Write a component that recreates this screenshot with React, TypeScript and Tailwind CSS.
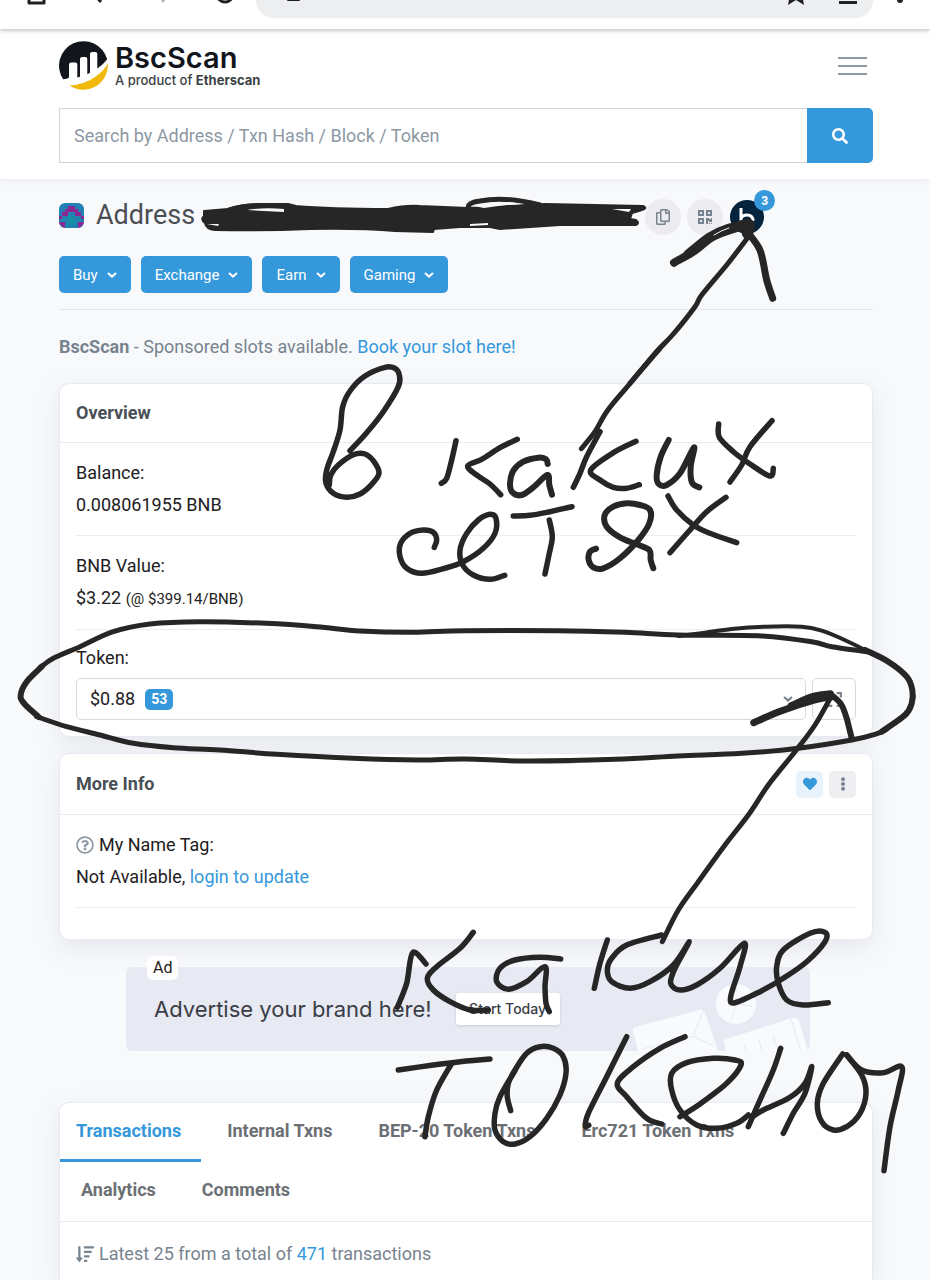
import React from "react";
import {
  FaSearch,
  FaRegCopy,
  FaQrcode,
  FaHeart,
  FaEllipsisV,
  FaRegQuestionCircle,
  FaSortAmountDown,
  FaExpand,
} from "react-icons/fa";

type Point = [number, number];
type InkStroke = { origin: Point; width?: number; points: number[] };

/* Smooth curve (Catmull-Rom) through pen samples taken at three samples per pixel. */
function inkPath({ origin, points }: InkStroke): string {
  const p: Point[] = [];
  for (let i = 0; i < points.length; i += 2) {
    p.push([origin[0] + points[i] / 3, origin[1] + points[i + 1] / 3]);
  }
  const f = (n: number) => n.toFixed(1);
  let d = `M${f(p[0][0])} ${f(p[0][1])}`;
  for (let i = 0; i < p.length - 1; i++) {
    const a = p[Math.max(i - 1, 0)];
    const b = p[i];
    const c = p[i + 1];
    const e = p[Math.min(i + 2, p.length - 1)];
    d += `C${f(b[0] + (c[0] - a[0]) / 6)} ${f(b[1] + (c[1] - a[1]) / 6)} ${f(c[0] - (e[0] - b[0]) / 6)} ${f(
      c[1] - (e[1] - b[1]) / 6,
    )} ${f(c[0])} ${f(c[1])}`;
  }
  return d;
}

const A: Point = [300, 350];
const B: Point = [560, 350];
const C: Point = [460, 180];
const D: Point = [0, 600];
const E: Point = [465, 600];
const F: Point = [100, 920];
const G: Point = [500, 900];

const INK: InkStroke[] = [
  { origin: A, points: [150, 302, 200, 248, 250, 185, 295, 110, 298, 75, 285, 55, 255, 52, 195, 78, 152, 120, 128, 170, 120, 240, 100, 305, 80, 360, 78, 400, 100, 430, 140, 442, 180, 432, 215, 403, 237, 370, 222, 335, 195, 312, 160, 314, 115, 345, 92, 375, 88, 405] },
  { origin: A, points: [468, 272, 455, 330, 440, 385, 424, 400] },
  { origin: A, points: [652, 268, 600, 293, 545, 328, 503, 348, 530, 375, 570, 402, 602, 434] },
  { origin: A, width: 6, points: [743, 342, 738, 328, 715, 323, 670, 335, 640, 362, 630, 400, 638, 428, 665, 435, 700, 412, 742, 375, 748, 405, 756, 434] },
  { origin: A, points: [640, 498, 690, 496, 750, 485, 816, 470] },
  { origin: A, points: [748, 510, 757, 560, 748, 610, 735, 672] },
  { origin: A, points: [403, 592, 410, 570, 400, 547, 370, 540, 330, 550, 302, 580, 300, 620, 320, 655, 365, 670, 430, 656, 490, 635, 550, 595, 585, 550, 588, 505, 570, 493, 535, 510, 500, 550, 480, 600, 488, 645, 520, 675, 570, 688, 614, 676] },
  { origin: B, points: [120, 245, 80, 320, 60, 370, 40, 412] },
  { origin: B, points: [228, 274, 160, 308, 92, 360, 120, 390, 160, 412, 200, 415, 238, 404] },
  { origin: B, width: 6, points: [326, 270, 302, 320, 290, 375, 296, 402, 320, 405, 360, 370, 402, 292, 392, 350, 396, 398, 418, 412] },
  { origin: B, points: [476, 222, 478, 262, 520, 305, 570, 342, 630, 378, 640, 355] },
  { origin: B, points: [636, 212, 570, 290, 545, 345, 510, 396] },
  { origin: B, width: 6, points: [108, 596, 90, 605, 86, 630, 100, 652, 130, 655, 180, 625, 235, 570, 268, 520, 270, 480, 240, 465, 200, 460, 160, 470, 134, 495, 140, 530, 180, 562, 230, 583, 268, 600, 272, 630, 280, 655] },
  { origin: B, points: [324, 438, 350, 480, 400, 525, 450, 550, 530, 578] },
  { origin: B, points: [498, 442, 440, 485, 390, 540, 330, 608] },
  { origin: B, width: 5, points: [64, 296, 105, 245, 140, 185, 200, 112, 300, -5] },
  { origin: C, width: 5, points: [510, 610, 585, 520, 640, 462, 705, 380, 725, 345, 800, 255, 862, 175] },
  { origin: C, width: 8, points: [642, 248, 700, 215, 760, 170, 830, 144, 868, 138] },
  { origin: C, width: 6, points: [680, 220, 745, 168, 800, 142, 868, 130] },
  { origin: C, width: 7, points: [850, 140, 895, 200, 908, 240, 920, 300, 938, 355] },
  { origin: C, width: 11, points: [840, 138, 868, 134, 862, 160] },
  { origin: E, width: 4, points: [640, 108, 720, 98, 800, 87, 900, 80, 1010, 80, 1070, 92, 1150, 125, 1215, 158] },
  { origin: E, width: 6, points: [1200, 150, 1270, 185, 1325, 230, 1342, 270, 1340, 310, 1320, 345, 1250, 395] },
  { origin: E, width: 5, points: [1265, 388, 1230, 403, 1160, 420, 1000, 445, 830, 460, 640, 468, 450, 478, 180, 483, 0, 477, -140, 480, -335, 475, -565, 463, -735, 450, -875, 443, -995, 430, -1095, 405, -1195, 380, -1285, 350] },
  { origin: D, width: 6, points: [115, 350, 72, 310, 62, 285, 80, 245, 125, 200] },
  { origin: D, width: 5, points: [120, 203, 160, 175, 240, 140, 340, 95, 450, 72, 600, 65, 800, 70, 950, 80, 1080, 93, 1240, 97, 1395, 92, 1675, 92, 1875, 97, 2035, 105, 2275, 107, 2435, 125, 2495, 140, 2600, 155] },
  { origin: E, width: 5, points: [592, 1025, 640, 930, 700, 845, 780, 735, 850, 645, 910, 555, 990, 455, 1050, 375, 1098, 290] },
  { origin: E, width: 7, points: [866, 368, 950, 332, 1050, 300, 1100, 290] },
  { origin: E, width: 8, points: [980, 318, 1040, 292, 1095, 283] },
  { origin: E, width: 6, points: [1100, 285, 1128, 312, 1145, 355, 1160, 415] },
  { origin: F, points: [892, 262, 920, 190, 938, 98, 978, 132] },
  { origin: F, points: [1120, 37, 1080, 85, 1010, 140, 982, 175, 1000, 210, 1050, 245, 1110, 270, 1165, 270] },
  { origin: G, points: [182, 177, 120, 172, 45, 180, 0, 205, -10, 245, 25, 268, 80, 245, 135, 200, 135, 260, 138, 310, 148, 335] },
  { origin: G, points: [322, 120, 300, 190, 283, 265] },
  { origin: G, points: [485, 105, 380, 135, 335, 175, 322, 210, 335, 245, 390, 265, 450, 245, 520, 195, 568, 125, 525, 205, 512, 250, 540, 270, 590, 255, 660, 205, 733, 130, 720, 200, 692, 290, 705, 308, 780, 275, 850, 235, 920, 185, 975, 125, 975, 97, 930, 100, 850, 150, 830, 200, 835, 250, 860, 300, 910, 315, 985, 308] },
  { origin: F, points: [895, 450, 1000, 435, 1080, 425, 1170, 417] },
  { origin: F, points: [1055, 430, 1010, 510, 985, 590, 975, 650] },
  { origin: G, points: [45, 512, 0, 590, -15, 640, -15, 690, 10, 725, 45, 732, 90, 710, 140, 655, 180, 585, 198, 520, 190, 470, 160, 445, 120, 440, 80, 460, 45, 510, 25, 550, 22, 590, 32, 632] },
  { origin: G, points: [380, 410, 320, 530, 265, 640, 256, 678, 266, 676] },
  { origin: G, points: [555, 410, 480, 445, 400, 500, 352, 550, 380, 590, 440, 655, 485, 672] },
  { origin: G, points: [540, 650, 600, 612, 680, 550, 723, 495, 705, 480, 640, 475, 560, 488, 515, 520, 515, 570, 540, 630, 590, 675, 650, 685, 710, 670, 745, 645] },
  { origin: G, points: [842, 445, 820, 510, 780, 600, 745, 680] },
  { origin: G, points: [755, 652, 790, 630, 870, 592, 915, 550, 935, 500, 915, 580, 880, 640, 850, 700] },
  { origin: G, points: [1028, 462, 970, 550, 952, 610, 965, 665, 1000, 690, 1040, 680, 1080, 640, 1098, 580, 1085, 525, 1040, 465] },
  { origin: G, points: [1040, 465, 1085, 510, 1150, 518, 1205, 500, 1195, 570, 1170, 680, 1152, 812] },
];

function InkOverlay() {
  return (
    <svg
      className="pointer-events-none absolute left-0 top-0 z-10"
      width="930"
      height="1280"
      viewBox="0 0 930 1280"
      fill="none"
      stroke="#262626"
      strokeLinecap="round"
      strokeLinejoin="round"
      aria-hidden="true"
    >
      <path
        fill="#262626"
        strokeWidth="2"
        d="M204 211L228 209Q240 205 258 204L288 204L296 206Q330 209 388 209Q405 205 420 206L468 208L545 204L643 206Q648 208 642 210L632 213L630 219L636 220Q640 223 636 225L560 225L500 229L490 227L460 227L434 229L433 232L395 231Q360 228 310 229Q260 231 215 230Q206 229 205 223Q200 219 204 216Z"
      />
      <path strokeWidth="5" d="M469 208Q466 203 480 201Q505 196 540 205" />
      <path strokeWidth="4" d="M228 210Q245 204 262 206L290 206" />
      <path fill="#f8f9fb" stroke="none" d="M474 206Q500 199 522 204Q500 205 484 208ZM247 210Q264 207 284 209L284 212ZM207 224L219 224L218 226ZM612 209L631 209L629 212ZM470 224L488 223L488 225L470 226Z" />
      {INK.map((s, i) => (
        <path key={i} d={inkPath(s)} strokeWidth={s.width ?? 5.5} />
      ))}
      <path stroke="#f8f9fb" strokeWidth="1" d="M714 235Q722 230 729 228" />
    </svg>
  );
}

function BrowserBar() {
  return (
    <div className="relative z-[1] flex h-[29px] items-start bg-white pr-[22px] text-[#202124] shadow-[0_1px_5px_rgba(0,0,0,0.3)]">
      <button aria-label="Home" className="ml-[27px] h-[6px] w-5">
        <svg width="20" height="6" fill="none" stroke="currentColor" strokeWidth="3">
          <path d="M2 -2V3H17V-2" strokeLinejoin="round" />
        </svg>
      </button>
      <button aria-label="Back" className="ml-[44px] h-[6px] w-5">
        <svg width="20" height="6" fill="none" stroke="currentColor" strokeWidth="3">
          <path d="M2 -7L10 2" />
        </svg>
      </button>
      <button aria-label="Forward" className="ml-[44px] h-[6px] w-5 text-[#a8a8a8]">
        <svg width="20" height="6" fill="none" stroke="currentColor" strokeWidth="2">
          <path d="M15 -7L7 2" />
        </svg>
      </button>
      <button aria-label="Reload" className="ml-[40px] h-[6px] w-5">
        <svg width="20" height="6" fill="none" stroke="currentColor" strokeWidth="3">
          <circle cx="10" cy="-6" r="8" />
        </svg>
      </button>
      <div className="ml-[21px] flex h-[18px] flex-1 items-start rounded-b-[28px] bg-[#edeef0]">
        <svg className="ml-[31px]" width="14" height="3" fill="currentColor" aria-hidden="true">
          <path d="M0 -2H13V0Q13 1 12 1H1Q0 1 0 0Z" />
        </svg>
        <span className="flex-1" />
        <button aria-label="Bookmark" className="mr-[32px] h-[6px] w-5">
          <svg width="20" height="6" fill="currentColor">
            <path d="M4 -6L2 5L10 0L18 5L16 -6Z" />
          </svg>
        </button>
        <button aria-label="Downloads" className="mr-[15px] h-[6px] w-5">
          <svg width="20" height="6" fill="currentColor">
            <path d="M1 1H19V4H1Z" />
          </svg>
        </button>
      </div>
      <button aria-label="Browser menu" className="ml-[23px] h-[6px] w-3">
        <svg width="12" height="6" fill="currentColor">
          <circle cx="4" cy="0" r="3" />
        </svg>
      </button>
    </div>
  );
}

function LogoMark() {
  return (
    <svg width="49" height="49" viewBox="0 0 49 49" aria-hidden="true">
      <path
        fill="#12161c"
        d="M4.200 38.300A24.500 24.500 0 1 1 48.200 18.300Q44.500 23.500 38.300 27.500V13Q38.300 11 36.300 11H33.200Q31 11 31 13V31.800L28.300 33.200V18Q28.300 16 26.300 16H23.200Q21 16 21 18V35.800L18.300 36.600V23.500Q18.300 21.500 16.300 21.500H12.300Q10 21.500 10 23.500V36.500Q8.500 38.300 4.200 38.300Z"
      />
      <path fill="#f0b90b" d="M10.500 44.500C26 44 42 35 48.800 22.500A24.500 24.500 0 0 1 10.500 44.500Z" />
    </svg>
  );
}

function Header() {
  return (
    <header className="bg-white pb-4 pl-[59px] pr-[57px] pt-3 shadow-[0_1px_6px_rgba(138,152,186,0.15)]">
      <div className="flex items-center justify-between">
        <a href="#" className="flex items-center gap-[7px]">
          <LogoMark />
          <span className="flex flex-col font-[Inter,sans-serif] text-[#12161c]">
            <span className="text-[29px] font-semibold leading-7">BscScan</span>
            <span className="whitespace-nowrap text-[13px] font-medium leading-4 text-[#3b3f44]">
              A product of <b className="font-bold">Etherscan</b>
            </span>
          </span>
        </a>
        <button aria-label="Toggle navigation" className="mr-[6px] flex w-[29px] flex-col gap-[6px]">
          <span className="h-[2px] bg-[#8c98a4]" />
          <span className="h-[2px] bg-[#8c98a4]" />
          <span className="h-[2px] bg-[#8c98a4]" />
        </button>
      </div>
      <form className="mt-[18px] flex h-[55px]" onSubmit={(e) => e.preventDefault()}>
        <input
          aria-label="Search"
          placeholder="Search by Address / Txn Hash / Block / Token"
          className="min-w-0 flex-1 border border-r-0 border-[#d0d4d9] bg-white px-[14px] text-[18px] outline-none placeholder:text-[#8c98a4]"
        />
        <button
          aria-label="Submit search"
          className="flex w-[66px] items-center justify-center rounded-r-[5px] bg-[#3498db] text-white"
        >
          <FaSearch size={16} />
        </button>
      </form>
    </header>
  );
}

const IDENTICON = ["bbbbbbbb", "bbbppbbb", "bbppppbb", "bppbbppb", "pbbttbbp", "btbttbtb", "ppbttbpp", "bpbbbbpb"];
const IDENTICON_FILL: Record<string, string> = { b: "#2380b4", p: "#8a2790", t: "#168fa5" };

function Identicon() {
  return (
    <svg className="h-[25px] w-[25px] rounded-[6px]" viewBox="0 0 8 8" shapeRendering="crispEdges" aria-hidden="true">
      {IDENTICON.flatMap((row, y) =>
        [...row].map((c, x) => <rect key={`${x}-${y}`} x={x} y={y} width="1" height="1" fill={IDENTICON_FILL[c]} />),
      )}
    </svg>
  );
}

function Chevron() {
  return (
    <svg width="10" height="6" viewBox="0 0 10 6" fill="none" stroke="currentColor" strokeWidth="2" aria-hidden="true">
      <path d="M1 1L5 4.600L9 1" />
    </svg>
  );
}

function AddressTitle() {
  return (
    <div className="flex h-[40px] items-center">
      <Identicon />
      <h1 className="ml-3 text-[27px] leading-8 text-[#4a4f55]">Address</h1>
      <span className="w-[450px]" />
      <button
        aria-label="Copy address"
        className="mt-1 flex size-9 items-center justify-center rounded-full bg-[#ececf0] text-[#77838f]"
      >
        <FaRegCopy size={16} />
      </button>
      <button
        aria-label="Show QR code"
        className="ml-[6px] mt-1 flex size-9 items-center justify-center rounded-full bg-[#ececf0] text-[#77838f]"
      >
        <FaQrcode size={16} />
      </button>
      <button aria-label="Other networks" className="relative ml-[7px] mt-1 size-[34px] rounded-full bg-[#04233c]">
        <svg width="34" height="34" viewBox="0 0 34 34" fill="none" stroke="#fff" strokeWidth="3">
          <path d="M11 8V24M11 19Q12 15 17 15Q23 15 23 21" />
        </svg>
        <span className="absolute -right-[11px] -top-[10px] flex size-[21px] items-center justify-center rounded-full bg-[#3498db] text-[12px] font-bold text-white">
          3
        </span>
      </button>
    </div>
  );
}

function Card({ children, className = "" }: { children: React.ReactNode; className?: string }) {
  return (
    <section
      className={`border border-[#e7eaf3] bg-white shadow-[0_8px_24px_rgba(138,146,166,0.16)] ${className}`}
    >
      {children}
    </section>
  );
}

const TABS = ["Transactions", "Internal Txns", "BEP-20 Token Txns", "Erc721 Token Txns", "Analytics", "Comments"];

export default function App() {
  return (
    <div className="relative flex min-h-screen flex-col bg-[#f8f9fb] font-[Roboto,'Liberation_Sans',sans-serif] text-[18px] leading-8 text-[#1e2022]">
      <BrowserBar />
      <Header />
      <main className="flex flex-1 flex-col pl-[59px] pr-[57px] pt-4">
        <AddressTitle />
        <div className="mt-[21px] flex gap-[10px] border-b border-[#e2e5ea] pb-4">
          {["Buy", "Exchange", "Earn", "Gaming"].map((label) => (
            <button
              key={label}
              className="flex h-[37px] items-center gap-[9px] rounded-[5px] bg-[#3498db] px-[14px] text-[15px] text-white"
            >
              {label}
              <Chevron />
            </button>
          ))}
        </div>
        <p className="mt-[21px] text-[#77838f]">
          <b>BscScan</b> - Sponsored slots available.{" "}
          <a href="#" className="text-[#3498db]">
            Book your slot here!
          </a>
        </p>

        <Card className="mt-5 rounded-[10px]">
          <h2 className="flex h-[59px] items-center border-b border-[#e7eaf3] px-4 font-bold text-[#4a4f55]">Overview</h2>
          <div className="px-4 pb-4">
            <dl>
              <div className="border-b border-[#eceef2] py-[14px]">
                <dt>Balance:</dt>
                <dd>0.008061955 BNB</dd>
              </div>
              <div className="border-b border-[#eceef2] py-[14px]">
                <dt>BNB Value:</dt>
                <dd>
                  $3.22 <span className="text-[15px]">(@ $399.14/BNB)</span>
                </dd>
              </div>
            </dl>
            <div className="pt-3">
              <span id="token-label">Token:</span>
              <div className="mt-1 flex h-[42px] gap-[6px]">
                <button
                  aria-labelledby="token-label"
                  aria-haspopup="listbox"
                  className="flex flex-1 items-center rounded-[5px] border border-[#d5dae2] pl-[13px] pr-3"
                >
                  $0.88
                  <span className="ml-[10px] flex h-[21px] items-center rounded-[5px] bg-[#3498db] px-[6px] text-[14px] font-bold text-white">
                    53
                  </span>
                  <span className="ml-auto text-[#77838f]">
                    <Chevron />
                  </span>
                </button>
                <button
                  aria-label="View token holdings"
                  className="flex w-[44px] items-center justify-center rounded-[5px] border border-[#d5dae2] text-[#77838f]"
                >
                  <FaExpand size={17} />
                </button>
              </div>
            </div>
          </div>
        </Card>

        <Card className="mt-4 rounded-[10px]">
          <div className="flex h-[61px] items-center gap-[6px] border-b border-[#e7eaf3] px-4">
            <h2 className="mr-auto font-bold text-[#4a4f55]">More Info</h2>
            <button
              aria-label="Add to favourites"
              className="flex size-[27px] items-center justify-center rounded-[5px] bg-[#e8f2fa] text-[#3498db]"
            >
              <FaHeart size={14} />
            </button>
            <button
              aria-label="More options"
              className="flex size-[27px] items-center justify-center rounded-[5px] bg-[#efeff2] text-[#77838f]"
            >
              <FaEllipsisV size={14} />
            </button>
          </div>
          <div className="px-4 pb-[31px]">
            <div className="border-b border-[#eceef2] py-[14px]">
              <div className="flex items-center gap-[5px]">
                <FaRegQuestionCircle size={18} className="text-[#8c98a4]" />
                My Name Tag:
              </div>
              <div>
                Not Available,{" "}
                <a href="#" className="text-[#3498db]">
                  login to update
                </a>
              </div>
            </div>
          </div>
        </Card>

        <aside className="relative ml-[67px] mr-[63px] mt-[27px] flex h-[84px] items-center rounded-[6px] bg-[#e7e9f3] pl-7 font-[Inter,sans-serif] text-[#3a3d45]">
          <span className="absolute -top-[11px] left-[21px] rounded-[6px] bg-white px-[6px] font-[Roboto,sans-serif] text-[16px] leading-6 text-[#1e2022]">
            Ad
          </span>
          <span className="whitespace-nowrap text-[22px]">Advertise your brand here!</span>
          <a
            href="#"
            className="ml-6 flex h-8 w-[104px] items-center justify-center whitespace-nowrap rounded-[3px] bg-white text-[14px] font-medium shadow-[0_1px_3px_rgba(0,0,0,0.12)]"
          >
            Start Today
          </a>
          <svg className="absolute bottom-0 right-0" width="182" height="84" viewBox="0 0 182 84" aria-hidden="true">
            <path fill="#f9fafd" d="M5 64Q4 62 7 60L71 43Q75 42 77 46L90 84H10Z" />
            <path fill="none" stroke="#e7e9f3" d="M75 44L65 69L86 79M65 69L14 82" />
            <circle cx="108" cy="37" r="20" fill="#f9fafd" />
            <path fill="none" stroke="#e7e9f3" d="M108 37V20M108 37L103 55M108 37L124 39" />
            <path fill="#f9fafd" d="M96 76Q95 73 98 72L164 51Q169 50 171 54L180 84H98Z" />
            <path fill="none" stroke="#e7e9f3" d="M163 52L173 84M145 68L150 84M131 73L134 84M116 78L118 84" />
          </svg>
        </aside>

        <Card className="mt-[51px] flex-1 rounded-t-[10px] border-b-0">
          <div role="tablist" className="flex flex-wrap border-b border-[#e7eaf3] text-[#6c7075]">
            {TABS.map((tab, i) => (
              <button
                key={tab}
                role="tab"
                aria-selected={i === 0}
                className={`mx-[5px] flex h-[59px] items-center border-b-3 pl-4 pr-5 font-bold first:ml-0 ${
                  i === 0 ? "border-[#3498db] text-[#3498db]" : "border-transparent"
                }`}
              >
                {tab}
              </button>
            ))}
          </div>
          <p className="flex items-center gap-[5px] px-4 pt-4 text-[#77838f]">
            <FaSortAmountDown size={18} />
            <span>
              Latest 25 from a total of{" "}
              <a href="#" className="text-[#3498db]">
                471
              </a>{" "}
              transactions
            </span>
          </p>
        </Card>
      </main>
      <InkOverlay />
    </div>
  );
}
